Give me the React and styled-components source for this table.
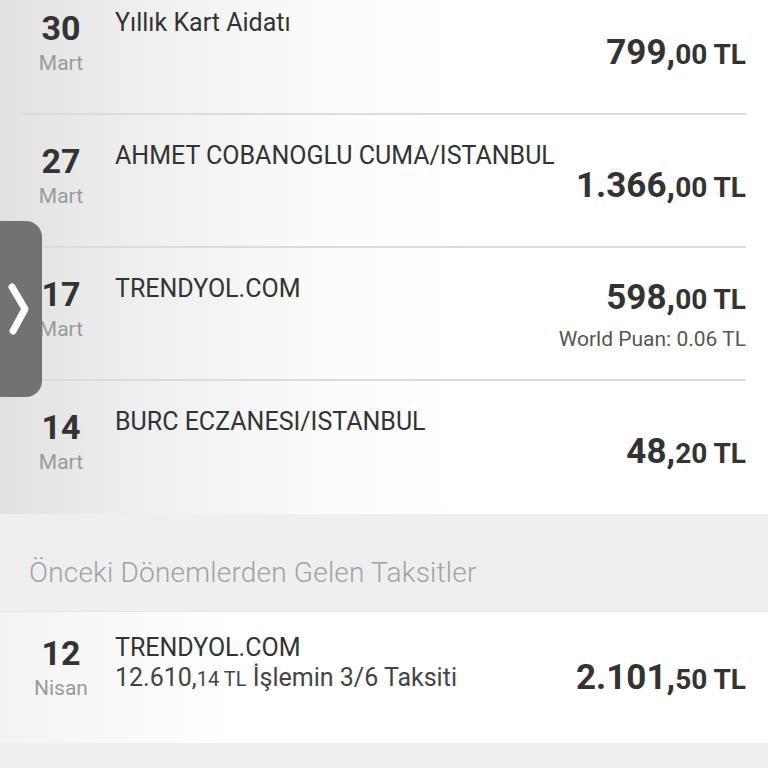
import React from 'react';
import styled, { createGlobalStyle } from 'styled-components';

const GlobalStyle = createGlobalStyle`
  html, body {
    margin: 0;
    padding: 0;
    background: #efefef;
    font-family: Roboto, "Noto Sans", Arial, sans-serif;
    overflow: hidden;
  }
`;

const Screen = styled.div`
  position: relative;
  width: 768px;
  height: 768px;
  overflow: hidden;
  background: #efefef;
`;

const Section = styled.div`
  background: linear-gradient(90deg, #e1e1e1 0%, #efefef 18%, #fbfbfb 42%, #ffffff 60%);
  margin-top: -18px;
`;

const Row = styled.div`
  box-sizing: border-box;
  height: ${p => p.$height || 133}px;
  margin: 0 22px;
  padding-top: ${p => p.$top || 26}px;
  display: grid;
  grid-template-columns: 78px 1fr auto;
  column-gap: 15px;
  align-items: start;
  border-bottom: 2px solid #dcdcdc;

  &:last-child {
    border-bottom-color: transparent;
  }
`;

const DateBox = styled.div`
  display: flex;
  flex-direction: column;
  align-items: center;
`;

const Day = styled.div`
  font-size: 34px;
  line-height: 40px;
  font-weight: 700;
  color: #333;
`;

const Month = styled.div`
  margin-top: 2px;
  font-size: 21px;
  line-height: 26px;
  color: #9a9a9a;
`;

const Info = styled.div`
  display: flex;
  flex-direction: column;
`;

const Title = styled.div`
  font-size: 25px;
  line-height: 30px;
  color: #333;
  white-space: nowrap;
`;

const Sub = styled.div`
  font-size: 25px;
  line-height: 30px;
  color: #444;
  white-space: nowrap;

  small {
    font-size: 20px;
  }
`;

const AmountBox = styled.div`
  align-self: center;
  margin-top: ${p => p.$shift || 0}px;
  display: flex;
  flex-direction: column;
  align-items: flex-end;
`;

const Amount = styled.div`
  font-size: 35px;
  line-height: 42px;
  font-weight: 700;
  color: #333;
  white-space: nowrap;

  span {
    font-size: 28px;
  }
`;

const Puan = styled.div`
  margin-top: 5px;
  font-size: 21px;
  line-height: 26px;
  color: #555;
`;

const GroupHeader = styled.div`
  height: 97px;
  box-sizing: border-box;
  padding: 44px 0 0 29px;
  font-size: 28px;
  line-height: 30px;
  font-weight: 300;
  letter-spacing: 0.2px;
  color: #a2a2a2;
  background: #efefef;
`;

const InstallSection = styled.div`
  background: linear-gradient(90deg, #f3f3f3 0%, #ffffff 30%);
  border-top: 1px solid #e6e6e6;
`;

const SideTab = styled.div`
  position: absolute;
  left: -14px;
  top: 221px;
  width: 56px;
  height: 176px;
  border-radius: 16px;
  background: #727272;
  display: flex;
  align-items: center;
  padding-left: 21px;
  box-sizing: border-box;
`;

const transactions = [
  { day: '30', month: 'Mart', title: 'Yıllık Kart Aidatı', int: '799', dec: '00' },
  { day: '27', month: 'Mart', title: 'AHMET COBANOGLU CUMA/ISTANBUL', int: '1.366', dec: '00' },
  { day: '17', month: 'Mart', title: 'TRENDYOL.COM', int: '598', dec: '00', puan: 'World Puan: 0.06 TL' },
  { day: '14', month: 'Mart', title: 'BURC ECZANESI/ISTANBUL', int: '48', dec: '20' },
];

const Money = ({ int, dec }) => (
  <Amount>
    {int},<span>{dec} TL</span>
  </Amount>
);

export default function App() {
  return (
    <Screen>
      <GlobalStyle />
      <Section>
        {transactions.map(t => (
          <Row key={t.day + t.title}>
            <DateBox>
              <Day>{t.day}</Day>
              <Month>{t.month}</Month>
            </DateBox>
            <Info>
              <Title>{t.title}</Title>
            </Info>
            <AmountBox $shift={t.puan ? -25 : -14}>
              <Money int={t.int} dec={t.dec} />
              {t.puan && <Puan>{t.puan}</Puan>}
            </AmountBox>
          </Row>
        ))}
      </Section>

      <GroupHeader>Önceki Dönemlerden Gelen Taksitler</GroupHeader>

      <InstallSection>
        <Row $top={21} $height={131}>
          <DateBox>
            <Day>12</Day>
            <Month>Nisan</Month>
          </DateBox>
          <Info>
            <Title>TRENDYOL.COM</Title>
            <Sub>
              12.610,<small>14 TL</small> İşlemin 3/6 Taksiti
            </Sub>
          </Info>
          <AmountBox $shift={-16}>
            <Money int="2.101" dec="50" />
          </AmountBox>
        </Row>
      </InstallSection>

      <SideTab>
        <svg width="22" height="54" viewBox="0 0 22 54">
          <path
            d="M5 5 L18 27 L6 49"
            fill="none"
            stroke="#fff"
            strokeWidth="7"
            strokeLinecap="round"
            strokeLinejoin="round"
          />
        </svg>
      </SideTab>
    </Screen>
  );
}
